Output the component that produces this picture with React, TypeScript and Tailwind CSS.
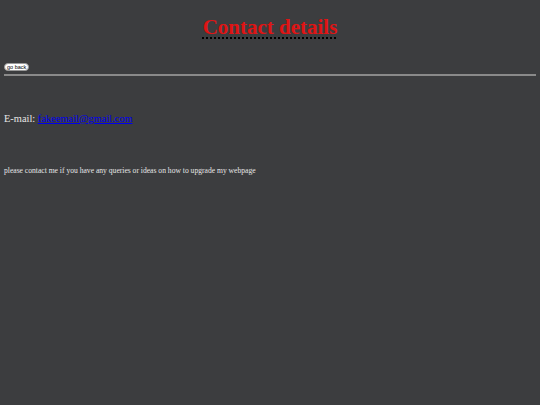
export default function App() {
  return (
    <div
      className="min-h-[405px] w-full bg-[#3c3d3f] px-[4px] pt-[14px]"
      style={{ fontFamily: '"Liberation Serif", "Times New Roman", serif' }}
    >
      <h1 className="text-center text-[21px] font-bold leading-[26px] text-[#e01414]">
        <span className="underline decoration-dotted decoration-black decoration-[2px] underline-offset-[3px]">
          Contact details
        </span>
      </h1>
      <div className="mt-[23px] flex">
        <button className="h-[8px] rounded-[4px] border border-[#999] bg-white px-[2px] text-[5.5px] leading-[6px] text-black" style={{ fontFamily: '"Liberation Sans", Arial, sans-serif' }}>
          go back
        </button>
      </div>
      <div className="mt-[3px] h-[2px] w-full bg-[#8a8a8a]" />
      <p className="mt-[37px] text-[10.4px] leading-[12px] text-[#e6e6e6]">
        E-mail:{" "}
        <a href="#" className="text-[#0000ee] underline">
          fakeemail@gmail.com
        </a>
      </p>
      <p className="mt-[41px] text-[7.6px] leading-[9px] text-[#e6e6e6]">
        please contact me if you have any queries or ideas on how to upgrade my webpage
      </p>
    </div>
  );
}
